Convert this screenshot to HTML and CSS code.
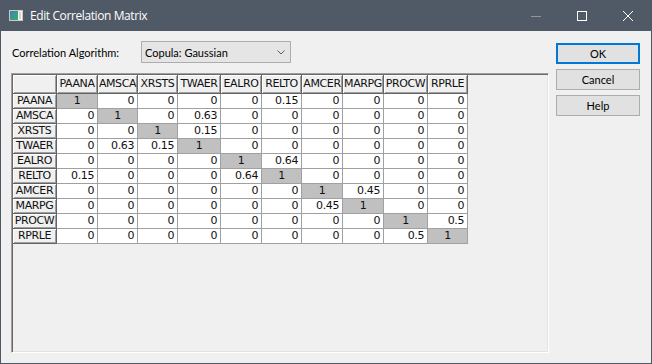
FILE: index.html
```html
<!DOCTYPE html>
<html lang="en">
<head>
  <meta charset="UTF-8" />
  <title>Edit Correlation Matrix</title>
  <link rel="stylesheet" href="styles.css">
</head>
<body>
  <div class="window">
    <!-- Title Bar -->
    <div class="titlebar">
      <svg class="app-icon" width="14" height="11" viewBox="0 0 14 11">
        <defs>
          <linearGradient id="iconFill" x1="0" y1="0" x2="1" y2="1">
            <stop offset="0" stop-color="#3d7fb8" />
            <stop offset="1" stop-color="#3fae66" />
          </linearGradient>
        </defs>
        <rect x="0.5" y="0.5" width="13" height="10" fill="#f6f6f6" stroke="#c9c9c9" />
        <rect x="1" y="1" width="8" height="9" fill="url(#iconFill)" />
        <rect x="10" y="2" width="2" height="7" fill="#d4d4d4" />
      </svg>
      <span class="title">Edit Correlation Matrix</span>
      <div class="caption-buttons">
        <span class="cap-btn">
          <svg width="10" height="10" viewBox="0 0 10 10"><path d="M0 5.5h10" stroke="#8f969f" /></svg>
        </span>
        <span class="cap-btn">
          <svg width="10" height="10" viewBox="0 0 10 10"><rect x="0.5" y="0.5" width="9" height="9" fill="none" stroke="#fff" /></svg>
        </span>
        <span class="cap-btn">
          <svg width="10" height="10" viewBox="0 0 10 10"><path d="M0 0L10 10M10 0L0 10" stroke="#fff" /></svg>
        </span>
      </div>
    </div>

    <!-- Dialog Body -->
    <div class="client">
      <div class="main">
        <div class="algo-row">
          <label class="algo-label">Correlation Algorithm:</label>
          <div class="combo">
            <span>Copula: Gaussian</span>
            <svg class="chevron" width="8" height="5" viewBox="0 0 8 5"><path d="M0.5 0.5L4 4L7.5 0.5" fill="none" stroke="#5a5a5a" /></svg>
          </div>
        </div>

        <div class="grid-frame">
          <div class="matrix">
            <div class="cell fixed head"></div>
            <div class="cell fixed head">PAANA</div>
            <div class="cell fixed head">AMSCA</div>
            <div class="cell fixed head">XRSTS</div>
            <div class="cell fixed head">TWAER</div>
            <div class="cell fixed head">EALRO</div>
            <div class="cell fixed head">RELTO</div>
            <div class="cell fixed head">AMCER</div>
            <div class="cell fixed head">MARPG</div>
            <div class="cell fixed head">PROCW</div>
            <div class="cell fixed head">RPRLE</div>

            <div class="cell fixed">PAANA</div>
            <div class="cell diag">1</div>
            <div class="cell">0</div>
            <div class="cell">0</div>
            <div class="cell">0</div>
            <div class="cell">0</div>
            <div class="cell">0.15</div>
            <div class="cell">0</div>
            <div class="cell">0</div>
            <div class="cell">0</div>
            <div class="cell">0</div>

            <div class="cell fixed">AMSCA</div>
            <div class="cell">0</div>
            <div class="cell diag">1</div>
            <div class="cell">0</div>
            <div class="cell">0.63</div>
            <div class="cell">0</div>
            <div class="cell">0</div>
            <div class="cell">0</div>
            <div class="cell">0</div>
            <div class="cell">0</div>
            <div class="cell">0</div>

            <div class="cell fixed">XRSTS</div>
            <div class="cell">0</div>
            <div class="cell">0</div>
            <div class="cell diag">1</div>
            <div class="cell">0.15</div>
            <div class="cell">0</div>
            <div class="cell">0</div>
            <div class="cell">0</div>
            <div class="cell">0</div>
            <div class="cell">0</div>
            <div class="cell">0</div>

            <div class="cell fixed">TWAER</div>
            <div class="cell">0</div>
            <div class="cell">0.63</div>
            <div class="cell">0.15</div>
            <div class="cell diag">1</div>
            <div class="cell">0</div>
            <div class="cell">0</div>
            <div class="cell">0</div>
            <div class="cell">0</div>
            <div class="cell">0</div>
            <div class="cell">0</div>

            <div class="cell fixed">EALRO</div>
            <div class="cell">0</div>
            <div class="cell">0</div>
            <div class="cell">0</div>
            <div class="cell">0</div>
            <div class="cell diag">1</div>
            <div class="cell">0.64</div>
            <div class="cell">0</div>
            <div class="cell">0</div>
            <div class="cell">0</div>
            <div class="cell">0</div>

            <div class="cell fixed">RELTO</div>
            <div class="cell">0.15</div>
            <div class="cell">0</div>
            <div class="cell">0</div>
            <div class="cell">0</div>
            <div class="cell">0.64</div>
            <div class="cell diag">1</div>
            <div class="cell">0</div>
            <div class="cell">0</div>
            <div class="cell">0</div>
            <div class="cell">0</div>

            <div class="cell fixed">AMCER</div>
            <div class="cell">0</div>
            <div class="cell">0</div>
            <div class="cell">0</div>
            <div class="cell">0</div>
            <div class="cell">0</div>
            <div class="cell">0</div>
            <div class="cell diag">1</div>
            <div class="cell">0.45</div>
            <div class="cell">0</div>
            <div class="cell">0</div>

            <div class="cell fixed">MARPG</div>
            <div class="cell">0</div>
            <div class="cell">0</div>
            <div class="cell">0</div>
            <div class="cell">0</div>
            <div class="cell">0</div>
            <div class="cell">0</div>
            <div class="cell">0.45</div>
            <div class="cell diag">1</div>
            <div class="cell">0</div>
            <div class="cell">0</div>

            <div class="cell fixed">PROCW</div>
            <div class="cell">0</div>
            <div class="cell">0</div>
            <div class="cell">0</div>
            <div class="cell">0</div>
            <div class="cell">0</div>
            <div class="cell">0</div>
            <div class="cell">0</div>
            <div class="cell">0</div>
            <div class="cell diag">1</div>
            <div class="cell">0.5</div>

            <div class="cell fixed">RPRLE</div>
            <div class="cell">0</div>
            <div class="cell">0</div>
            <div class="cell">0</div>
            <div class="cell">0</div>
            <div class="cell">0</div>
            <div class="cell">0</div>
            <div class="cell">0</div>
            <div class="cell">0</div>
            <div class="cell">0.5</div>
            <div class="cell diag">1</div>
          </div>
        </div>
      </div>

      <div class="buttons">
        <button class="btn btn-default">OK</button>
        <button class="btn">Cancel</button>
        <button class="btn">Help</button>
      </div>
    </div>
  </div>
</body>
</html>
```

FILE: styles.css
```css
/* Reset */
* {
  margin: 0;
  padding: 0;
  box-sizing: border-box;
}
body {
  width: 652px;
  height: 364px;
  overflow: hidden;
  background: #f0f0f0;
  color: #000;
  font-family: Lato, "Noto Sans", sans-serif;
  font-size: 11px;
}
/* Window frame */
.window {
  width: 652px;
  height: 364px;
  border: 1px solid #505a66;
  border-top: 0;
  display: flex;
  flex-direction: column;
}
.titlebar {
  height: 31px;
  flex-shrink: 0;
  background: #505a66;
  color: #fff;
  display: flex;
  align-items: center;
}
.app-icon {
  margin-left: 8px;
  flex-shrink: 0;
}
.title {
  margin-left: 7px;
  font-family: "Open Sans", sans-serif;
  font-size: 12px;
  letter-spacing: -0.4px;
}
.caption-buttons {
  margin-left: auto;
  display: flex;
  height: 100%;
}
.cap-btn {
  width: 46px;
  height: 100%;
  display: flex;
  align-items: center;
  justify-content: center;
}
/* Dialog body */
.client {
  flex: 1;
  display: flex;
  gap: 7px;
  padding: 10px 11px 10px 10px;
}
.main {
  width: 538px;
  display: flex;
  flex-direction: column;
}
.algo-row {
  height: 22px;
  display: flex;
  align-items: center;
}
.algo-label {
  width: 130px;
  padding-left: 1px;
}
.combo {
  width: 150px;
  height: 22px;
  border: 1px solid #adadad;
  background: #e5e5e5;
  display: flex;
  align-items: center;
  padding-left: 3px;
}
.chevron {
  margin-left: auto;
  margin-right: 5px;
}
/* Sunken grid frame */
.grid-frame {
  margin-top: 10px;
  height: 280px;
  padding: 1px;
  border: 1px solid;
  border-color: #a0a0a0 #fff #fff #a0a0a0;
  box-shadow: inset 1px 1px #696969, inset -1px -1px #e3e3e3;
  background: #f0f0f0;
}
.matrix {
  display: grid;
  grid-template-columns: 44px 41px 40px 40px 43px 41px 40px 41px 41px 44px 40px;
  grid-template-rows: 19px repeat(10, 15px);
  font-family: "DejaVu Sans", sans-serif;
  font-size: 11px;
  letter-spacing: -0.4px;
  color: #111;
}
.cell {
  background: #fff;
  border-right: 1px solid #a0a0a0;
  border-bottom: 1px solid #a0a0a0;
  text-align: right;
  padding-right: 3px;
  line-height: 14px;
  white-space: nowrap;
  overflow: hidden;
}
.fixed {
  background: #f0f0f0;
  border-color: #646464;
  box-shadow: inset 1px 1px #fff, inset -1px -1px #a0a0a0;
  text-align: center;
  padding: 0;
}
.head {
  line-height: 18px;
}
.diag {
  background: #c0c0c0;
  text-align: center;
  padding: 0;
}
/* Buttons */
.buttons {
  width: 84px;
  display: flex;
  flex-direction: column;
  gap: 5px;
  padding-top: 2px;
}
.btn {
  height: 21px;
  border: 1px solid #adadad;
  background: #e1e1e1;
  color: #000;
  font-family: Lato, "Noto Sans", sans-serif;
  font-size: 11px;
}
.btn-default {
  border: 2px solid #0078d7;
}
```
